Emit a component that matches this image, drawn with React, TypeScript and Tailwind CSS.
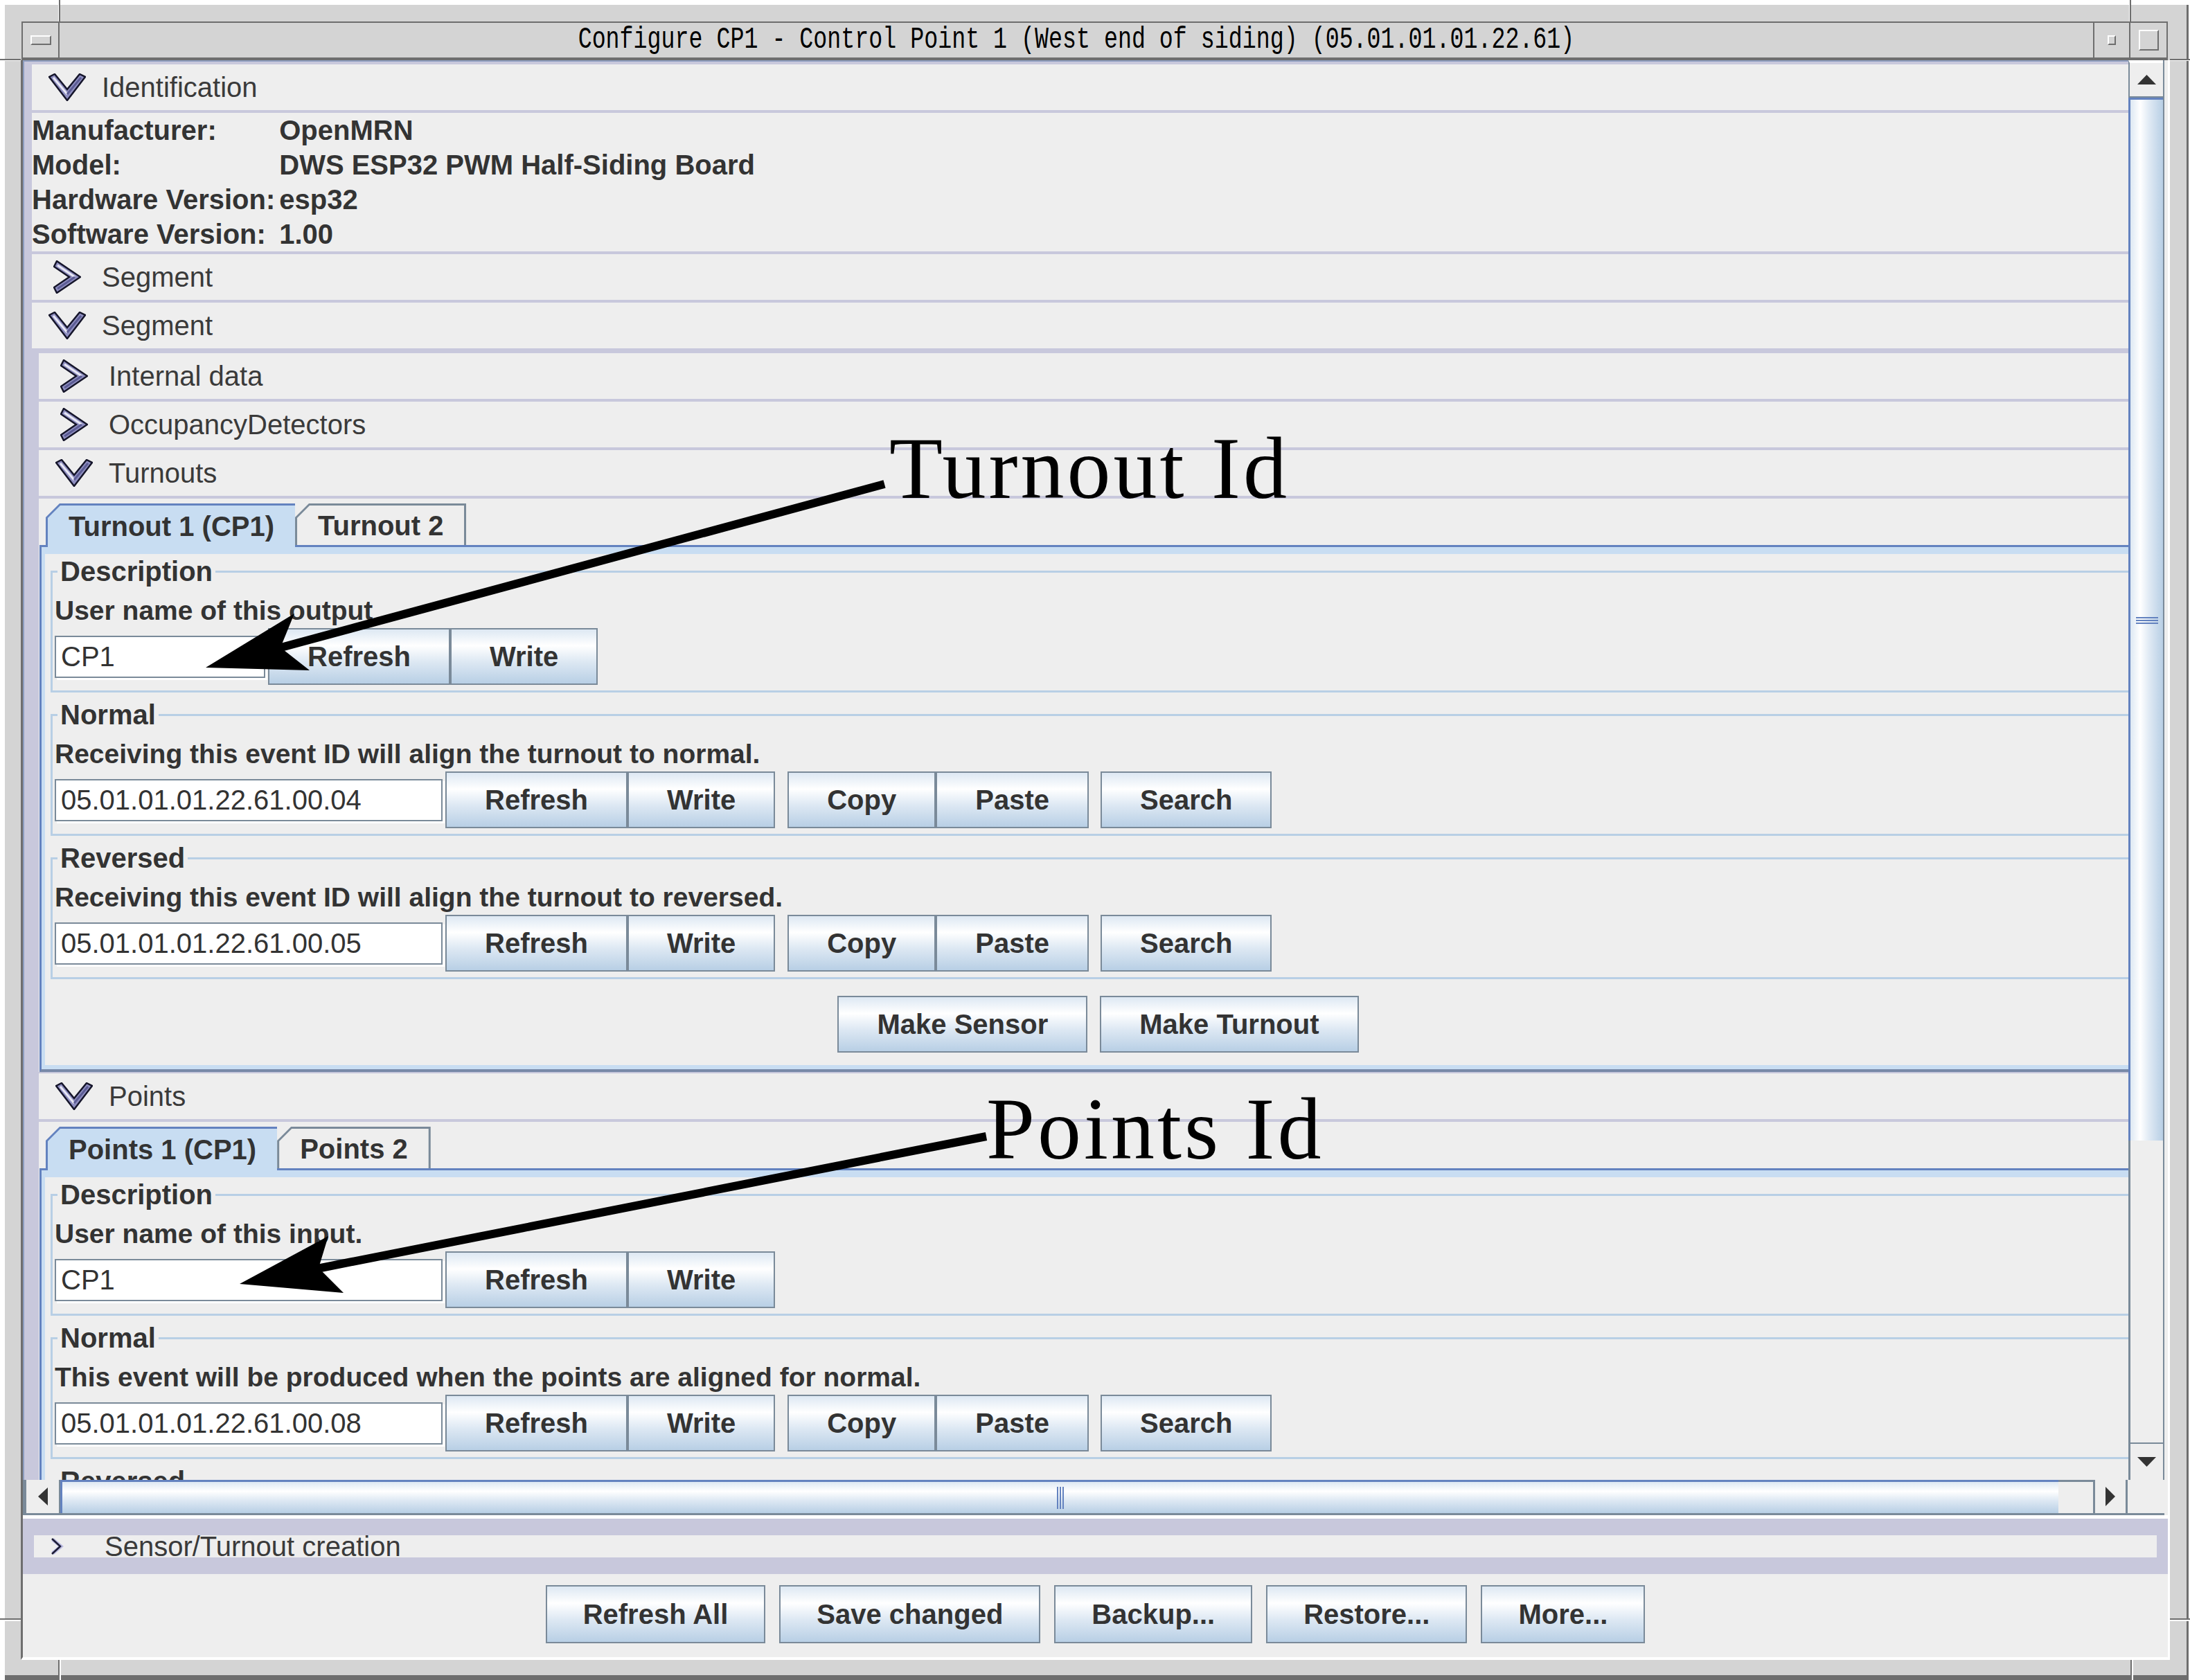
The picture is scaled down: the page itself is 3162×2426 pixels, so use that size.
import type { ReactNode } from "react";

const BTN_BG = "bg-[linear-gradient(180deg,#dde8f3_0%,#ffffff_30%,#dde8f3_60%,#b8cfe5_100%)]";
const THUMB_V = "bg-[linear-gradient(90deg,#dde8f3_0%,#ffffff_30%,#dde8f3_60%,#b8cfe5_100%)]";

function OpenIcon() {
  return (
    <svg width="54" height="40" viewBox="0 0 54 40">
      <path d="M1 5 L9 1 L27 23 L45 1 L53 5 L27 39 Z" fill="#8e8ec0" stroke="#15152a" strokeWidth="2.5" />
      <path d="M7 6 L27 30" fill="none" stroke="#e8e8f4" strokeWidth="3" />
      <path d="M27 30 L47 6" fill="none" stroke="#5c5c94" strokeWidth="3" />
    </svg>
  );
}

function ClosedIcon() {
  return (
    <svg width="40" height="48" viewBox="0 0 40 48">
      <path d="M5 1 L1 9 L23 24 L1 39 L5 47 L39 24 Z" fill="#8e8ec0" stroke="#15152a" strokeWidth="2.5" />
      <path d="M6 7 L31 24" fill="none" stroke="#e8e8f4" strokeWidth="3" />
      <path d="M31 24 L6 41" fill="none" stroke="#5c5c94" strokeWidth="3" />
    </svg>
  );
}

function Header({ title, open, sep }: { title: string; open?: boolean; sep?: boolean }) {
  return (
    <div
      className={`flex items-center pl-[24px] ${sep ? "h-[70px] border-b-4 border-[#c8c8dc]" : "h-[66px]"}`}
    >
      <div className="flex w-[54px] justify-center">{open ? <OpenIcon /> : <ClosedIcon />}</div>
      <span className="ml-[23px] text-[40px] leading-none text-[#3a3a3a]">{title}</span>
    </div>
  );
}

function Btn({ label, tall }: { label: string; tall?: boolean }) {
  return (
    <button
      type="button"
      className={`flex items-center justify-center border-2 border-[#7a8a99] text-[40px] font-bold leading-none text-[#333] ${BTN_BG} ${tall ? "h-[84px] px-[52px]" : "h-[82px] px-[55px]"}`}
    >
      {label}
    </button>
  );
}

function Field({ value, wide }: { value: string; wide?: boolean }) {
  return (
    <input
      readOnly
      value={value}
      className={`h-[61px] border-2 border-[#7a8a99] bg-white pl-[7px] text-[40px] text-[#333] shadow-[3px_3px_0_#ffffff] outline-none ${wide ? "w-[560px]" : "w-[304px]"}`}
    />
  );
}

function NameRow({ value, wide }: { value: string; wide?: boolean }) {
  return (
    <div className="flex h-[82px] items-center">
      <Field value={value} wide={wide} />
      <div className="ml-[4px] flex">
        <Btn label="Refresh" />
        <Btn label="Write" />
      </div>
    </div>
  );
}

function EventRow({ value }: { value: string }) {
  return (
    <div className="flex h-[82px] items-center">
      <Field value={value} wide />
      <div className="ml-[4px] flex">
        <Btn label="Refresh" />
        <Btn label="Write" />
      </div>
      <div className="ml-[18px] flex">
        <Btn label="Copy" />
        <Btn label="Paste" />
      </div>
      <div className="ml-[17px] flex">
        <Btn label="Search" />
      </div>
    </div>
  );
}

function Group({
  title,
  text,
  first,
  children,
}: {
  title: string;
  text: string;
  first?: boolean;
  children: ReactNode;
}) {
  return (
    <fieldset
      className={`${first ? "mt-[2px]" : "mt-[9px]"} min-w-0 border-[3px] border-[#b8cfe5] px-[3px] pb-[8px]`}
    >
      <legend className="ml-[4px] px-[4px] text-[40px] font-bold leading-[46px] text-[#333]">{title}</legend>
      <div className="mt-[9px] whitespace-nowrap text-[39px] font-bold leading-[50px] text-[#333]">{text}</div>
      {children}
    </fieldset>
  );
}

function Tab({ label, selected }: { label: string; selected?: boolean }) {
  return (
    <div
      className={
        selected
          ? "relative z-10 -mb-[3px] h-[63px] bg-[#6382bf] pl-[3px] pt-[3px] [clip-path:polygon(0_20px,20px_0,100%_0,100%_100%,0_100%)]"
          : "h-[60px] bg-[#7a8a99] px-[3px] pt-[3px] [clip-path:polygon(0_20px,20px_0,100%_0,100%_100%,0_100%)]"
      }
    >
      <div
        className={`flex h-full items-center px-[30px] text-[40px] font-bold leading-none text-[#333] [clip-path:polygon(0_18px,18px_0,100%_0,100%_100%,0_100%)] ${selected ? "bg-[#c8ddf2]" : "bg-[#eeeeee]"}`}
      >
        {label}
      </div>
    </div>
  );
}

function TabPane({ tabs, children }: { tabs: string[]; children: ReactNode }) {
  return (
    <div className="ml-[1px] pt-[7px]">
      <div className="flex items-end pl-[9px]">
        {tabs.map((t, i) => (
          <Tab key={t} label={t} selected={i === 0} />
        ))}
      </div>
      <div className="border-b-4 border-l-[3px] border-t-[3px] border-[#6382bf] border-b-[#7889a8]">
        <div className="border-b-[6px] border-l-[5px] border-t-[10px] border-[#c8ddf2] px-[8px] pb-[18px]">
          {children}
        </div>
      </div>
    </div>
  );
}

function Grip({ vertical }: { vertical?: boolean }) {
  return (
    <div className={`flex gap-[2px] ${vertical ? "flex-col" : ""}`}>
      {[0, 1, 2].map((i) => (
        <div
          key={i}
          className={vertical ? "h-[2px] w-[32px] bg-[#6382bf]" : "h-[32px] w-[2px] bg-[#6382bf]"}
        />
      ))}
    </div>
  );
}

export default function App() {
  return (
    <div className="relative h-[2426px] w-[3162px] overflow-hidden bg-white pl-[7px] pt-[7px] font-['Liberation_Sans',Arial,sans-serif]">
      {/* window frame */}
      <div className="h-[2419px] w-[3153px] border-b-[7px] border-r-[3px] border-[#6e6e6e] bg-[#d4d4d4] pl-[23px] pr-[24px] pt-[24px]">
        {/* title bar */}
        <div className="ml-[1px] mr-[3px] flex h-[56px] border-2 border-b-4 border-[#6e6e6e] bg-[#d4d4d4]">
          <div className="flex w-[53px] items-center justify-center border-r-2 border-[#6e6e6e]">
            <div className="h-[14px] w-[30px] border-2 border-white border-b-[#6e6e6e] border-r-[#6e6e6e]" />
          </div>
          <div className="flex flex-1 items-center justify-center font-['Liberation_Mono',monospace] text-[33.3px] leading-none text-black">
            <span className="inline-block scale-y-[1.35] whitespace-pre">
              Configure CP1 - Control Point 1 (West end of siding) (05.01.01.01.22.61)
            </span>
          </div>
          <div className="flex w-[52px] items-center justify-center border-l-2 border-[#6e6e6e]">
            <div className="h-[14px] w-[12px] border-2 border-white border-b-[#6e6e6e] border-r-[#6e6e6e]" />
          </div>
          <div className="flex w-[54px] items-center justify-center border-l-2 border-[#6e6e6e]">
            <div className="h-[30px] w-[29px] border-2 border-white border-b-[#6e6e6e] border-r-[#6e6e6e]" />
          </div>
        </div>

        {/* window content */}
        <div className="flex h-[2310px] flex-col border-b-4 border-l-[3px] border-r-[3px] border-b-white border-l-[#6e6e6e] border-r-white bg-[#eeeeee] text-[#333]">
          {/* scroll pane */}
          <div className="mr-[5px] flex h-[2101px] flex-col">
            <div className="flex h-[2050px]">
              <div className="flex-1 overflow-hidden border-l-2 border-t-2 border-[#8d9dbf]">
                <div className="w-[3092px] border-x-[11px] border-t-4 border-[#c8c8dc]">
                  <Header title="Identification" open sep />
                  <div className="grid h-[204px] grid-cols-[auto_1fr] content-start gap-x-[6px] border-b-4 border-[#c8c8dc] text-[40px] font-bold leading-[50px] text-[#333]">
                    <span>Manufacturer:</span>
                    <span>OpenMRN</span>
                    <span>Model:</span>
                    <span>DWS ESP32 PWM Half-Siding Board</span>
                    <span>Hardware Version:</span>
                    <span>esp32</span>
                    <span>Software Version:</span>
                    <span>1.00</span>
                  </div>
                  <Header title="Segment" sep />
                  <Header title="Segment" open />
                  <div className="border-x-[10px] border-t-[7px] border-[#c8c8dc]">
                    <Header title="Internal data" sep />
                    <Header title="OccupancyDetectors" sep />
                    <Header title="Turnouts" open sep />
                    <TabPane tabs={["Turnout 1 (CP1)", "Turnout 2"]}>
                      <Group title="Description" text="User name of this output" first>
                        <NameRow value="CP1" />
                      </Group>
                      <Group title="Normal" text="Receiving this event ID will align the turnout to normal.">
                        <EventRow value="05.01.01.01.22.61.00.04" />
                      </Group>
                      <Group title="Reversed" text="Receiving this event ID will align the turnout to reversed.">
                        <EventRow value="05.01.01.01.22.61.00.05" />
                      </Group>
                      <div className="mt-[24px] flex justify-center gap-[18px]">
                        <Btn label="Make Sensor" />
                        <Btn label="Make Turnout" />
                      </div>
                    </TabPane>
                    <div className="border-t-2 border-[#c8c8dc]">
                      <Header title="Points" open sep />
                    </div>
                    <TabPane tabs={["Points 1 (CP1)", "Points 2"]}>
                      <Group title="Description" text="User name of this input." first>
                        <NameRow value="CP1" wide />
                      </Group>
                      <Group title="Normal" text="This event will be produced when the points are aligned for normal.">
                        <EventRow value="05.01.01.01.22.61.00.08" />
                      </Group>
                      <Group title="Reversed" text="This event will be produced when the points are aligned for reversed.">
                        <EventRow value="05.01.01.01.22.61.00.09" />
                      </Group>
                    </TabPane>
                  </div>
                </div>
              </div>

              {/* vertical scrollbar */}
              <div className="flex w-[52px] flex-col border-r-2 border-[#7a8a99] bg-[#eeeeee]">
                <div className="flex h-[54px] items-center justify-center border-b-2 border-l-2 border-t-4 border-[#7a8a99] border-t-white">
                  <svg width="27" height="14" viewBox="0 0 27 14">
                    <polygon points="0,14 13.5,0 27,14" fill="#333" />
                  </svg>
                </div>
                <div className={`flex h-[1506px] items-center justify-center border-l-[3px] border-t-[3px] border-[#6382bf] ${THUMB_V}`}>
                  <Grip vertical />
                </div>
                <div className="flex-1 border-l-[3px] border-[#7a8a99]" />
                <div className="flex h-[54px] items-center justify-center border-l-[3px] border-t-2 border-[#7a8a99]">
                  <svg width="27" height="14" viewBox="0 0 27 14">
                    <polygon points="0,0 27,0 13.5,14" fill="#333" />
                  </svg>
                </div>
              </div>
            </div>

            {/* horizontal scrollbar */}
            <div className="flex h-[51px] border-b-[3px] border-[#7a8a99]">
              <div className="flex w-[54px] items-center justify-center border-l-[5px] border-r-2 border-[#7a8a99] bg-[#eeeeee]">
                <svg width="14" height="26" viewBox="0 0 14 26">
                  <polygon points="14,0 14,26 0,13" fill="#333" />
                </svg>
              </div>
              <div className={`flex w-[2885px] items-center justify-center border-l-[3px] border-t-[3px] border-[#6382bf] ${BTN_BG}`}>
                <Grip />
              </div>
              <div className="w-[50px] border-t-[3px] border-[#7a8a99] bg-[#eeeeee]" />
              <div className="flex w-[50px] items-center justify-center border-x-[3px] border-[#7a8a99] bg-[#eeeeee]">
                <svg width="14" height="28" viewBox="0 0 14 28">
                  <polygon points="0,0 14,14 0,28" fill="#333" />
                </svg>
              </div>
              <div className="w-[53px] bg-[#eeeeee]" />
            </div>
          </div>

          <div className="h-[5px] bg-white" />

          {/* Sensor/Turnout creation */}
          <div className="h-[80px] bg-[#c8c8dc] px-[16px] py-[24px]">
            <div className="flex h-[32px] items-center bg-[#eeeeee] pl-[24px]">
              <svg width="20" height="26" viewBox="0 0 20 26">
                <path d="M3 3 L15 13 L3 23" fill="none" stroke="#b8b8e0" strokeWidth="5" />
                <path d="M2 2 L14 13 L2 24" fill="none" stroke="#1c1c34" strokeWidth="2.5" />
              </svg>
              <span className="ml-[58px] text-[40px] leading-[32px] text-[#3a3a3a]">Sensor/Turnout creation</span>
            </div>
          </div>

          {/* bottom buttons */}
          <div className="flex flex-1 justify-center gap-[20px] pt-[16px]">
            <Btn label="Refresh All" tall />
            <Btn label="Save changed" tall />
            <Btn label="Backup..." tall />
            <Btn label="Restore..." tall />
            <Btn label="More..." tall />
          </div>
        </div>
      </div>

      {/* window manager corner marks */}
      <div className="absolute left-[84px] top-0 h-[31px] w-[3px] border-l border-white bg-[#6e6e6e]" />
      <div className="absolute left-[3074px] top-0 h-[31px] w-[3px] border-l border-white bg-[#6e6e6e]" />
      <div className="absolute left-0 top-[85px] h-[3px] w-[30px] border-b border-white bg-[#6e6e6e]" />
      <div className="absolute left-[3133px] top-[85px] h-[3px] w-[29px] border-b border-white bg-[#6e6e6e]" />
      <div className="absolute left-0 top-[2337px] h-[4px] w-[30px] border-b-2 border-white bg-[#6e6e6e]" />
      <div className="absolute left-[3133px] top-[2337px] h-[4px] w-[29px] border-b-2 border-white bg-[#6e6e6e]" />
      <div className="absolute left-[84px] top-[2397px] h-[29px] w-[4px] border-r-2 border-white bg-[#6e6e6e]" />
      <div className="absolute left-[3076px] top-[2397px] h-[29px] w-[4px] border-r-2 border-white bg-[#6e6e6e]" />

      {/* annotations */}
      <svg
        className="pointer-events-none absolute left-0 top-0"
        width="3162"
        height="2426"
        viewBox="0 0 3162 2426"
      >
        <line x1="1277" y1="699" x2="402" y2="936" stroke="#000" strokeWidth="12" />
        <path d="M297 964 L425 886 L405 935 L447 968 Z" fill="#000" />
        <line x1="1424" y1="1641" x2="458" y2="1832" stroke="#000" strokeWidth="12" />
        <path d="M346 1854 L474 1785 L460 1831 L496 1867 Z" fill="#000" />
      </svg>
      <div className="absolute left-[1284px] top-[614px] whitespace-nowrap font-['Liberation_Serif',serif] text-[126px] leading-none tracking-[4px] text-black">
        Turnout Id
      </div>
      <div className="absolute left-[1424px] top-[1568px] whitespace-nowrap font-['Liberation_Serif',serif] text-[126px] leading-none tracking-[4px] text-black">
        Points Id
      </div>
    </div>
  );
}
